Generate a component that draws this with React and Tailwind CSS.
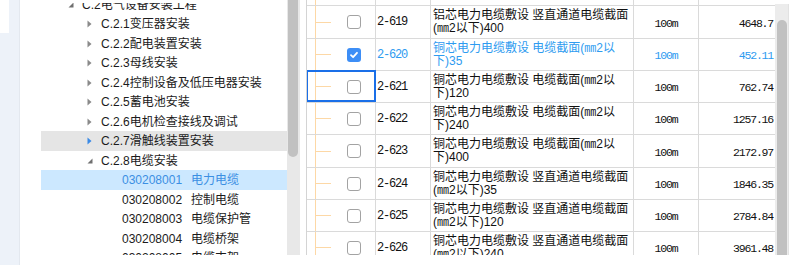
import React from 'react';

const treeRows = [
  { level: 0, label: 'C.2电气设备安装工程', open: true },
  { level: 1, label: 'C.2.1变压器安装' },
  { level: 1, label: 'C.2.2配电装置安装' },
  { level: 1, label: 'C.2.3母线安装' },
  { level: 1, label: 'C.2.4控制设备及低压电器安装' },
  { level: 1, label: 'C.2.5蓄电池安装' },
  { level: 1, label: 'C.2.6电机检查接线及调试' },
  { level: 1, label: 'C.2.7滑触线装置安装', hover: true },
  { level: 1, label: 'C.2.8电缆安装', open: true },
  { level: 2, code: '030208001', label: '电力电缆', selected: true },
  { level: 2, code: '030208002', label: '控制电缆' },
  { level: 2, code: '030208003', label: '电缆保护管' },
  { level: 2, code: '030208004', label: '电缆桥架' },
  { level: 2, code: '030208005', label: '电缆支架' },
];

const quotaRows = [
  { code: '2-619', l1: '铝芯电力电缆敷设 竖直通道电缆截面', l2: '(㎜2以下)400', unit: '100m', price: '4648.7' },
  { code: '2-620', l1: '铜芯电力电缆敷设 电缆截面(㎜2以', l2: '下)35', unit: '100m', price: '452.11', checked: true },
  { code: '2-621', l1: '铜芯电力电缆敷设 电缆截面(㎜2以', l2: '下)120', unit: '100m', price: '762.74', focused: true },
  { code: '2-622', l1: '铜芯电力电缆敷设 电缆截面(㎜2以', l2: '下)240', unit: '100m', price: '1257.16' },
  { code: '2-623', l1: '铜芯电力电缆敷设 电缆截面(㎜2以', l2: '下)400', unit: '100m', price: '2172.97' },
  { code: '2-624', l1: '铜芯电力电缆敷设 竖直通道电缆截面', l2: '(㎜2以下)35', unit: '100m', price: '1846.35' },
  { code: '2-625', l1: '铜芯电力电缆敷设 竖直通道电缆截面', l2: '(㎜2以下)120', unit: '100m', price: '2784.84' },
  { code: '2-626', l1: '铜芯电力电缆敷设 竖直通道电缆截面', l2: '(㎜2以下)240', unit: '100m', price: '3961.48' },
];

function Arrow({ open, blue }) {
  if (open) {
    return (
      <svg width="6" height="6" viewBox="0 0 6 6">
        <path d="M5.5 0.5 V5.5 H0.5Z" fill="#707070" />
      </svg>
    );
  }
  return (
    <svg width="5" height="8" viewBox="0 0 5 8">
      <path d="M0.5 0.5 L4.5 4 L0.5 7.5Z" fill={blue ? '#3a8ae6' : '#8a8a8a'} />
    </svg>
  );
}

function TreeRow({ row }) {
  const pad = row.level === 0 ? 'pl-[27px]' : row.level === 1 ? 'pl-[46px]' : 'pl-[81px]';
  const bg = row.selected ? 'bg-[#cce8ff]' : row.hover ? 'bg-[#e5e5e5]' : '';
  return (
    <div className={`h-[19.5px] flex items-center whitespace-nowrap ${pad} ${bg} ${row.selected ? 'text-[#3b8fe3]' : 'text-[#1b1b1b]'}`}>
      {row.level < 2 && (
        <span className="w-[14px] flex items-center">
          <Arrow open={row.open} blue={row.hover} />
        </span>
      )}
      {row.code && <span className="inline-block w-[69px] text-[12px]">{row.code}</span>}
      <span>{row.label}</span>
    </div>
  );
}

function Checkbox({ checked }) {
  if (checked) {
    return (
      <div className="w-[14px] h-[14px] rounded-[3px] bg-[#3d8ef6] flex items-center justify-center">
        <svg width="10" height="10" viewBox="0 0 10 10">
          <path d="M2 5.2 L4.1 7.2 L8 2.8" stroke="white" strokeWidth="1.8" fill="none" strokeLinecap="round" strokeLinejoin="round" />
        </svg>
      </div>
    );
  }
  return <div className="w-[14px] h-[14px] rounded-[3px] border-[1.5px] border-[#a3a3a3] bg-white" />;
}

function QuotaRow({ row, index }) {
  const h = index === 0 || index === 4 ? 'h-[33px]' : 'h-[32px]';
  const color = row.checked ? 'text-[#2e9bf0]' : 'text-[#111]';
  const mono = "font-['Liberation_Mono',monospace] tracking-[-1.2px]";
  return (
    <div className={`flex border-t border-[#dadada] ${h} ${color}`}>
      <div className="relative w-[69px] border-r border-[#dadada] flex items-center">
        <div className="ml-[8px] w-px self-stretch bg-[#fdd8a6]" />
        <div className="w-[15px] h-px bg-[#fdd8a6]" />
        <div className="ml-[16px]">
          <Checkbox checked={row.checked} />
        </div>
        {row.focused && <div className="absolute -top-px -left-px right-[-1px] bottom-0 border-2 border-[#1a6fe8]" />}
      </div>
      <div className={`w-[55px] border-r border-[#dadada] pl-[1px] flex items-center text-[12px] ${mono}`}>{row.code}</div>
      <div className="w-[203px] border-r border-[#dadada] pl-[2px] pt-[3px] text-[12px] leading-[12.5px] whitespace-nowrap overflow-hidden">
        <div>{row.l1}</div>
        <div>{row.l2}</div>
      </div>
      <div className={`w-[65px] border-r border-[#dadada] flex items-center justify-center pt-[3px] text-[11.5px] ${mono}`}>{row.unit}</div>
      <div className={`w-[76px] flex items-center justify-end pr-[2px] pt-[3px] text-[11.5px] ${mono}`}>{row.price}</div>
    </div>
  );
}

export default function App() {
  return (
    <div className="w-[805px] h-[265px] flex bg-white overflow-hidden font-['Liberation_Sans','Noto_Sans_CJK_SC',sans-serif]">
      {/* 背景窗口 */}
      <div className="w-[20px] h-full bg-[#edf2f9] border-r border-[#e3e8ef]">
        <div className="w-[9px] h-[33px] bg-white" />
      </div>

      {/* 清单树 */}
      <div className="w-[267px] h-full pl-[21px] pt-[3px] text-[12px]">
        <div className="h-[252px] overflow-hidden">
          <div className="-mt-[8.25px]">
            {treeRows.map((row, i) => (
              <TreeRow key={i} row={row} />
            ))}
          </div>
        </div>
      </div>
      <div className="w-[13px] h-[255px] bg-[#e8e8e8] pl-px">
        <div className="w-[10px] h-[157px] bg-[#c1c1c1] rounded-b-[5px]" />
      </div>

      <div className="w-[6px]" />

      {/* 定额表 */}
      <div className="w-[469px] h-[255px] border-l border-[#d4d4d4] overflow-hidden">
        <div className="flex h-[5px]">
          <div className="w-[69px] border-r border-[#dadada] flex">
            <div className="ml-[8px] w-px bg-[#fdd8a6]" />
          </div>
          <div className="w-[55px] border-r border-[#dadada]" />
          <div className="w-[203px] border-r border-[#dadada]" />
          <div className="w-[65px] border-r border-[#dadada]" />
        </div>
        {quotaRows.map((row, i) => (
          <QuotaRow key={row.code} row={row} index={i} />
        ))}
      </div>
      <div className="w-[13px] h-[255px] pt-[4px]">
        <div className="h-full bg-[#ececec] pt-[16px] pl-[2px] pr-px">
          <div className="h-full bg-[#c1c1c1] rounded-t-[5px]" />
        </div>
      </div>
      <div className="w-px h-[251px] mt-[4px] bg-[#e2e2e2]" />
    </div>
  );
}
